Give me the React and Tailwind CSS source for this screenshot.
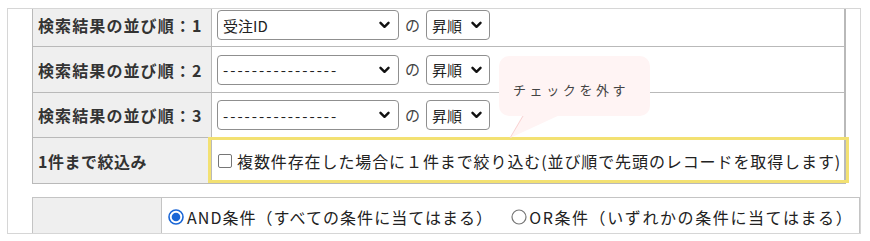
import React from 'react';

function Chevron() {
  return (
    <svg className="w-[11px] h-[8px] shrink-0" viewBox="0 0 11 8" fill="none" stroke="#111" strokeWidth="2.4" strokeLinecap="round" strokeLinejoin="round">
      <polyline points="1.5 1.8 5.5 5.8 9.5 1.8" />
    </svg>
  );
}

function FakeSelect({ value, wide, dashed }) {
  return (
    <div
      className={`flex items-center justify-between h-[30px] border border-[#8f8f8f] rounded-[4px] bg-white pl-[5px] ${
        wide ? 'w-[182px] pr-[8px]' : 'w-[64px] pr-[7px]'
      }`}
    >
      <span className={`text-[15px] text-[#222] whitespace-nowrap leading-none ${dashed ? 'tracking-[2px]' : ''}`}>{value}</span>
      <Chevron />
    </div>
  );
}

function SortRow({ label, value, height, dashed }) {
  return (
    <div className={`flex border-b border-[#b9b9b9] ${height}`}>
      <div className="w-[179px] shrink-0 bg-[#efefef] border-r border-[#b9b9b9] flex items-center pl-[5px]">
        <span className="text-[16px] font-bold text-[#333] tracking-[1.1px] whitespace-nowrap">{label}</span>
      </div>
      <div className="flex items-center pl-[5px] gap-[6px]">
        <FakeSelect value={value} wide dashed={dashed} />
        <span className="text-[15px] text-[#444]">の</span>
        <FakeSelect value="昇順" />
      </div>
    </div>
  );
}

export default function App() {
  const dashes = '----------------';
  return (
    <div
      className="relative w-[870px] h-[241px] bg-white overflow-hidden"
      style={{ fontFamily: "'Noto Sans CJK JP', 'Noto Sans', sans-serif" }}
    >
      {/* 外枠 */}
      <div className="ml-[7px] mt-[8px] w-[854px] h-[226px] border border-[#d6d6d6] overflow-hidden pl-[24px]">
        {/* 並び順テーブル */}
        <div className="-mt-[5px] w-[814px] border-l border-r-2 border-[#b9b9b9]">
          <SortRow label="検索結果の並び順：1" value="受注ID" height="h-[43px]" />
          <SortRow label="検索結果の並び順：2" value={dashes} height="h-[46px]" dashed />
          <SortRow label="検索結果の並び順：3" value={dashes} height="h-[45px]" dashed />
          <div className="flex border-b border-[#b9b9b9] h-[46px]">
            <div className="w-[179px] shrink-0 bg-[#efefef] border-r border-[#b9b9b9] flex items-center pl-[5px]">
              <span className="text-[16px] font-bold text-[#333] tracking-[0.5px] whitespace-nowrap">1件まで絞込み</span>
            </div>
            <div className="flex items-center pl-[6px] gap-[5px]">
              <span className="w-[14px] h-[14px] border border-[#767676] rounded-[2px] bg-white shrink-0" />
              <span className="text-[16px] text-[#222] tracking-[0.9px] whitespace-nowrap">
                複数件存在した場合に１件まで絞り込む(並び順で先頭のレコードを取得します)
              </span>
            </div>
          </div>
        </div>

        {/* 条件テーブル */}
        <div className="mt-[13px] w-[828px] h-[40px] flex border border-[#c4c4c4]">
          <div className="w-[129px] shrink-0 bg-[#efefef] border-r border-[#c4c4c4]" />
          <div className="flex items-center pl-[6px]">
            <svg className="w-[16px] h-[16px] shrink-0" viewBox="0 0 16 16">
              <circle cx="8" cy="8" r="7" fill="white" stroke="#1a66d6" strokeWidth="1.6" />
              <circle cx="8" cy="8" r="4.3" fill="#1a66d6" />
            </svg>
            <span className="ml-[3px] text-[16px] text-[#222] tracking-[1.05px] whitespace-nowrap">AND条件（すべての条件に当てはまる）</span>
            <svg className="ml-[18px] w-[16px] h-[16px] shrink-0" viewBox="0 0 16 16">
              <circle cx="8" cy="8" r="7" fill="white" stroke="#767676" strokeWidth="1.2" />
            </svg>
            <span className="ml-[2px] text-[16px] text-[#222] tracking-[1.6px] whitespace-nowrap">OR条件（いずれかの条件に当てはまる）</span>
          </div>
        </div>
      </div>

      {/* 注記：黄色枠 */}
      <div className="absolute left-[208px] top-[137px] w-[641px] h-[46px] border-[3px] border-[#f3e172] pointer-events-none" />

      {/* 注記：吹き出し */}
      <div className="absolute left-[499px] top-[56px] w-[151px] h-[60px] bg-[#fff4f4] rounded-[10px] pl-[14px] pt-[20px]">
        <span className="text-[13px] text-[#444] tracking-[3.6px] whitespace-nowrap">チェックを外す</span>
      </div>
      <svg className="absolute left-[505px] top-[114px] w-[60px] h-[26px]" viewBox="0 0 60 26">
        <polygon points="18,0 57,0 5,24" fill="#fff4f4" />
        <line x1="18" y1="2" x2="5" y2="24" stroke="#f7caca" strokeWidth="0.8" />
      </svg>
    </div>
  );
}
